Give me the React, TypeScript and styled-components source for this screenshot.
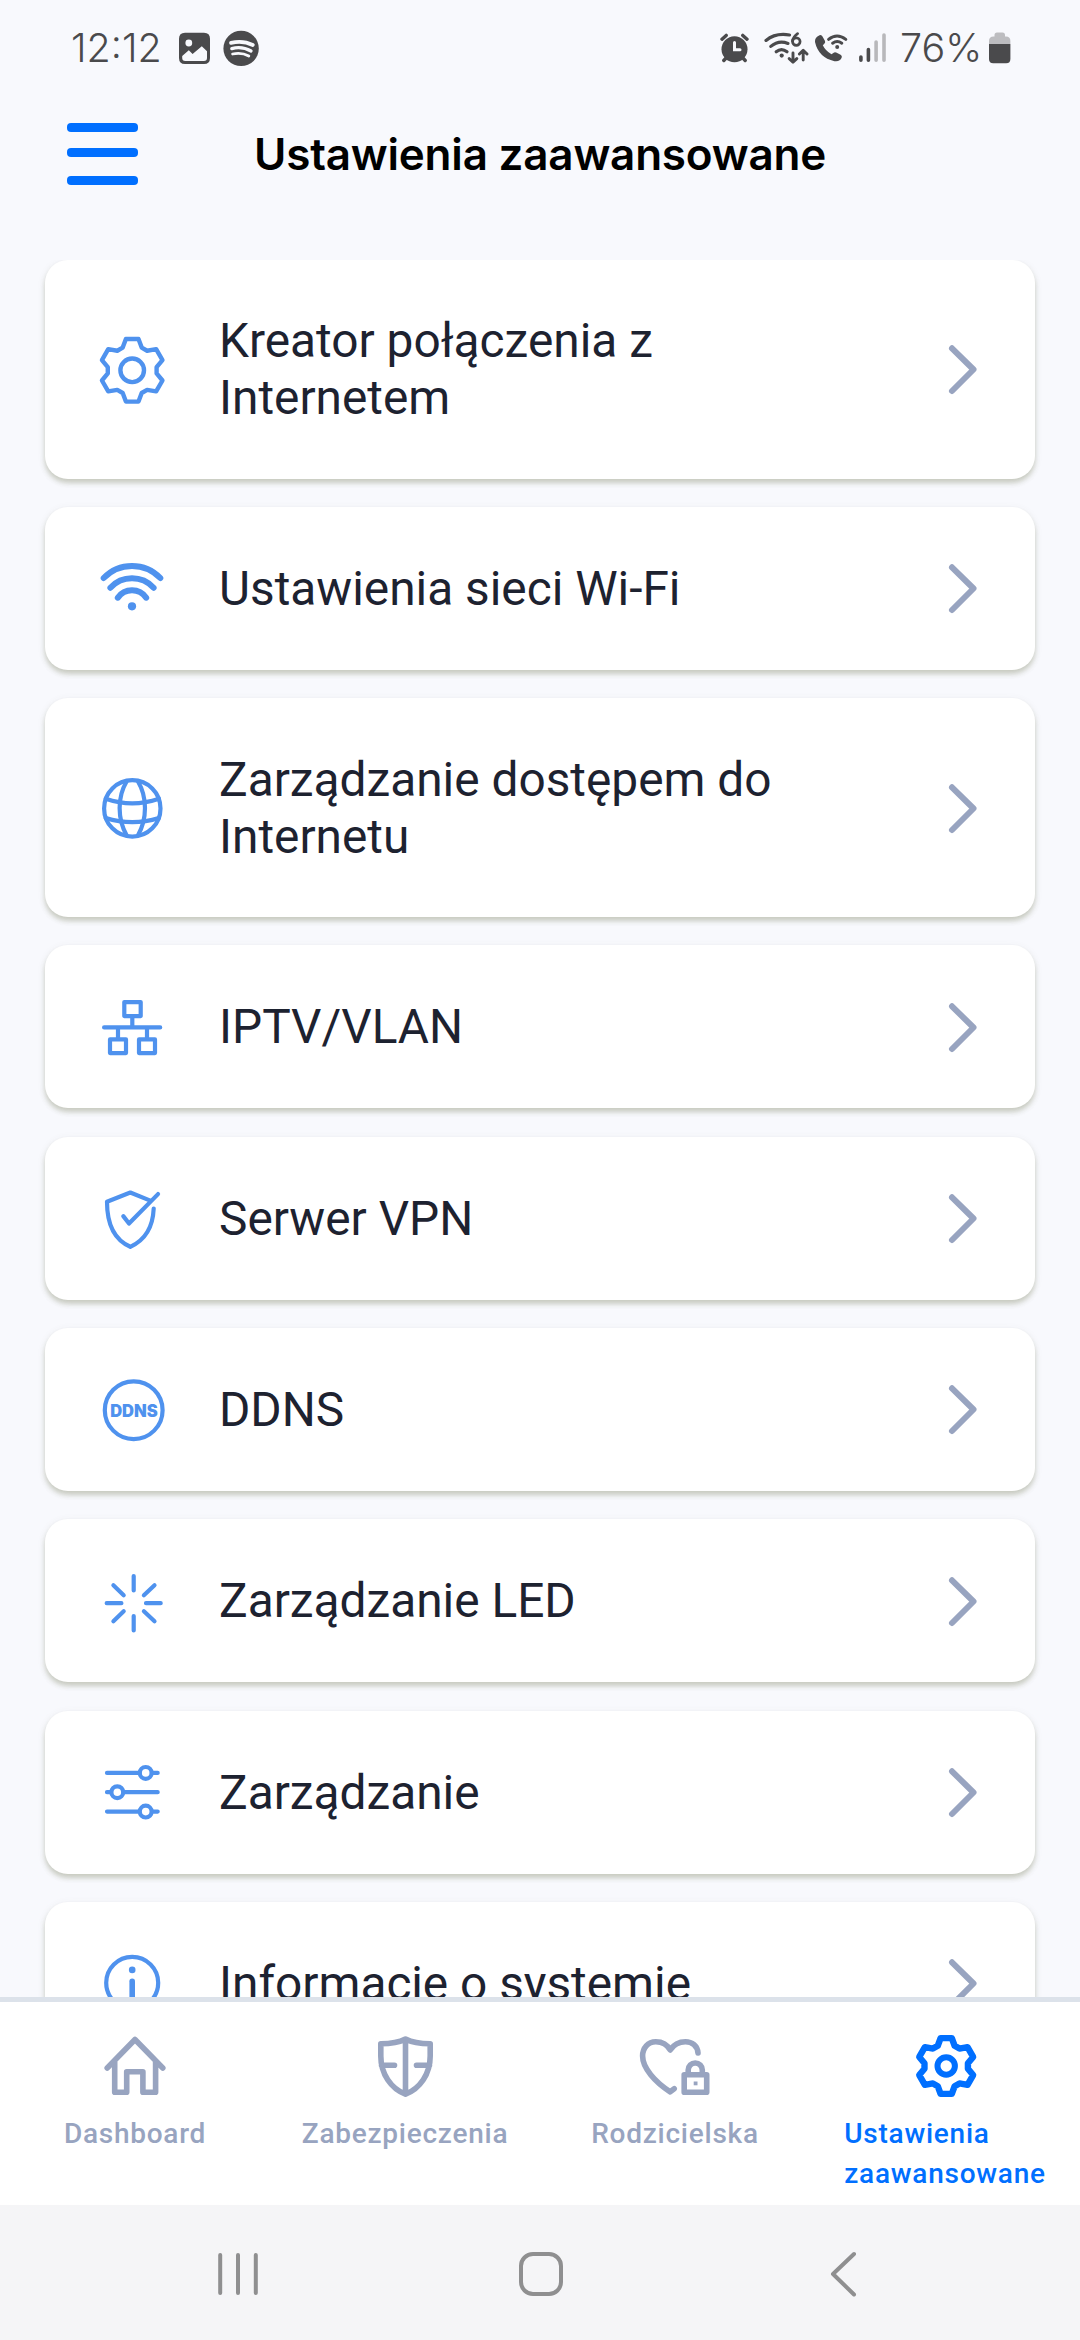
import React from "react";
import styled, { createGlobalStyle } from "styled-components";

const color = {
  page: "#f8f9fd",
  ink: "#1d2230",
  icon: "#4f92ee",
  muted: "#98a4c0",
  active: "#006fff",
  status: "#4a4a4c",
};

const GlobalStyle = createGlobalStyle`
  * { box-sizing: border-box; }
  body { margin: 0; background: ${color.page}; }
`;

const Screen = styled.div`
  width: 1080px;
  height: 2340px;
  display: flex;
  flex-direction: column;
  overflow: hidden;
  background: ${color.page};
  font-family: Roboto, "Liberation Sans", sans-serif;
`;

const StatusBar = styled.div`
  height: 96px;
  flex: none;
  display: flex;
  align-items: center;
  justify-content: space-between;
  padding: 0 69px 0 71px;
  color: ${color.status};
`;

const StatusGroup = styled.div`
  display: flex;
  align-items: center;
  height: 96px;
`;

const StatusText = styled.span<{ $width: number; $tracking: number; $gap?: number }>`
  width: ${(p) => p.$width}px;
  margin-left: ${(p) => p.$gap ?? 0}px;
  font-family: Inter, Roboto, sans-serif;
  font-weight: 350;
  font-size: 39.5px;
  line-height: 96px;
  letter-spacing: ${(p) => p.$tracking}px;
  white-space: nowrap;
`;

const StatusGlyph = styled.svg<{ $gap: number }>`
  display: block;
  flex: none;
  height: 96px;
  margin-left: ${(p) => p.$gap}px;
`;

const Header = styled.header`
  height: 163.5px;
  flex: none;
  display: grid;
  grid-template-columns: 71px 1fr 71px;
  align-items: start;
  padding: 27px 67px 0;
`;

const MenuButton = styled.button`
  display: grid;
  grid-template-rows: 25.2px 28.2px 8.6px;
  padding: 0;
  border: 0;
  background: none;
`;

const MenuLine = styled.span`
  width: 71px;
  height: 8.6px;
  border-radius: 4px;
  background: ${color.active};
`;

const Title = styled.h1`
  margin: 0;
  text-align: center;
  font-family: Inter, Roboto, sans-serif;
  font-weight: 600;
  font-size: 44px;
  line-height: 62px;
  letter-spacing: -0.2px;
  color: #000;
  white-space: nowrap;
`;

const List = styled.main`
  flex: 1;
  min-height: 0;
  overflow: hidden;
  display: flex;
  flex-direction: column;
  gap: 28.3px;
  padding: 0 45px;
`;

const Card = styled.div<{ $tall?: boolean }>`
  flex: none;
  height: ${(p) => (p.$tall ? 219 : 163)}px;
  display: flex;
  align-items: center;
  padding: 0 54px 0 51px;
  border-radius: 23px;
  background: #fff;
  box-shadow: 0 4px 5px rgba(90, 95, 50, 0.26), 0 2px 8px rgba(90, 95, 80, 0.08);
`;

const CardIcon = styled.svg`
  display: block;
  flex: none;
  width: 72px;
  height: 72px;
  overflow: visible;
  fill: none;
  stroke: ${color.icon};
  stroke-width: 4.2;
  stroke-linecap: round;
  stroke-linejoin: round;
`;

const DdnsText = styled.text`
  font-family: Inter, Roboto, sans-serif;
  font-weight: 900;
  font-size: 17px;
  fill: ${color.icon};
  stroke: none;
`;

const CardLabel = styled.span`
  flex: 1;
  margin-left: 51px;
  padding: 2px 120px 0 0;
  font-size: 47.8px;
  line-height: 57px;
  color: ${color.ink};
`;

const Chevron = styled.svg`
  display: block;
  flex: none;
  width: 36px;
  height: 60px;
  fill: none;
  stroke: ${color.muted};
  stroke-width: 6;
  stroke-linecap: round;
  stroke-linejoin: round;
`;

const TabBar = styled.nav`
  flex: none;
  height: 208.3px;
  display: grid;
  grid-template-columns: repeat(4, 1fr);
  border-top: 5.3px solid #dce2ea;
  background: #fff;
`;

const Tab = styled.div<{ $active?: boolean }>`
  display: flex;
  flex-direction: column;
  align-items: center;
  padding-top: 28px;
  color: ${(p) => (p.$active ? color.active : color.muted)};
`;

const TabIcon = styled.svg`
  display: block;
  width: 72px;
  height: 72px;
  overflow: visible;
  fill: none;
  stroke: currentColor;
  stroke-width: 5.6;
  stroke-linecap: round;
  stroke-linejoin: round;
`;

const TabLabel = styled.span`
  margin-top: 12px;
  font-weight: 500;
  font-size: 28px;
  line-height: 40px;
  letter-spacing: 0.75px;
  white-space: pre;
`;

const SystemBar = styled.div`
  flex: none;
  height: 135px;
  display: flex;
  align-items: center;
  justify-content: space-between;
  padding: 3px 208px 0 210px;
  background: #f5f5f7;
`;

const SystemGlyph = styled.svg`
  display: block;
  fill: none;
  stroke: #8f8f90;
  stroke-width: 4;
  stroke-linecap: round;
  stroke-linejoin: round;
`;

/* One tooth of the six-tooth gear, repeated every 60 degrees round the origin. */
const tooth: [number, number][] = [
  [-9.5, -22.7],
  [-6.3, -31.3],
  [6.3, -31.3],
  [9.5, -22.7],
];

const gearPath = (() => {
  const points: string[] = [];
  for (let i = 0; i < 6; i += 1) {
    const a = (i * Math.PI) / 3;
    for (const [x, y] of tooth) {
      const px = x * Math.cos(a) - y * Math.sin(a);
      const py = x * Math.sin(a) + y * Math.cos(a);
      points.push(`${px.toFixed(2)} ${py.toFixed(2)}`);
    }
  }
  return `M${points.join("L")}Z`;
})();

const icons: Record<string, React.ReactNode> = {
  gear: (
    <g transform="translate(36.2 37.3)" strokeWidth="4.4">
      <path d={gearPath} />
      <circle r="11.8" />
    </g>
  ),
  wifi: (
    <g strokeWidth="6">
      <path d="M7.7 26A39.2 39.2 0 0 1 64.3 26" />
      <path d="M14.4 35.7A29.5 29.5 0 0 1 57.6 35.7" />
      <path d="M21.8 45.7A17.3 17.3 0 0 1 50.2 45.7" />
      <circle cx="36" cy="54.3" r="4.1" fill={color.icon} stroke="none" />
    </g>
  ),
  globe: (
    <>
      <circle cx="36.3" cy="36.4" r="28.2" />
      <path d="M30.6 9.5C21.3 25 21.3 47 30.6 63.3M42 9.5C51.3 25 51.3 47 42 63.3" />
      <path d="M9.7 26.8Q36.3 36 62.9 26.8M9.7 46Q36.3 54.4 62.9 46" />
    </>
  ),
  network: (
    <>
      <rect x="28.3" y="11.1" width="16.4" height="14" />
      <rect x="14" y="48.4" width="16" height="13.7" />
      <rect x="43" y="48.4" width="16" height="13.7" />
      <path d="M8.1 36.4H64.2M36.3 26V36M22 37V47M51 37V47" />
    </>
  ),
  shield: (
    <>
      <path d="M54.3 18.6L34.3 10.5L11 19.8C11 41 17.5 57.5 34.3 64.8C51.5 57 57 43 57.7 26.5" />
      <path d="M27.3 34.1L33 41.5L62 12.1" />
    </>
  ),
  ddns: (
    <>
      <circle cx="37.7" cy="37.2" r="28.9" />
      <DdnsText x="37.9" y="44.2" textAnchor="middle" textLength="47.5" lengthAdjust="spacingAndGlyphs">
        DDNS
      </DdnsText>
    </>
  ),
  led: (
    <path
      transform="translate(37.7 38.2)"
      d="M0 -27.2V-12.8M0 12.8V27.2M-27 0H-12.3M12.3 0H27M-20.3 -18L-10 -8M20.8 -18L10.2 -8M-20.3 18L-10 8M20.8 18L10.2 8"
    />
  ),
  sliders: (
    <>
      <path d="M11 16.9H61.7M11 36.2H61.7M11 55.6H61.7" />
      <circle cx="49.7" cy="16.9" r="5.9" fill="#fff" />
      <circle cx="21.3" cy="36.2" r="5.9" fill="#fff" />
      <circle cx="49.7" cy="55.6" r="5.9" fill="#fff" />
    </>
  ),
  info: (
    <>
      <circle cx="36.2" cy="35.8" r="26" />
      <circle cx="36.2" cy="22.9" r="3.3" fill={color.icon} stroke="none" />
      <path d="M36.2 34.3V50" strokeWidth="5.6" />
    </>
  ),
};

const entries: { icon: string; label: string; tall?: boolean }[] = [
  { icon: "gear", label: "Kreator połączenia z Internetem", tall: true },
  { icon: "wifi", label: "Ustawienia sieci Wi-Fi" },
  { icon: "globe", label: "Zarządzanie dostępem do Internetu", tall: true },
  { icon: "network", label: "IPTV/VLAN" },
  { icon: "shield", label: "Serwer VPN" },
  { icon: "ddns", label: "DDNS" },
  { icon: "led", label: "Zarządzanie LED" },
  { icon: "sliders", label: "Zarządzanie" },
  { icon: "info", label: "Informacje o systemie" },
];

function Status() {
  const c = color.status;
  return (
    <StatusBar>
      <StatusGroup>
        <StatusText $width={91} $tracking={0}>12:12</StatusText>
        <StatusGlyph $gap={17} width="31" viewBox="179 0 31 96">
          <path
            fillRule="evenodd"
            fill={c}
            d="M185 32.8H204Q210 32.8 210 38.8V58Q210 64 204 64H185Q179 64 179 58V38.8Q179 32.8 185 32.8ZM182.2 56V58Q182.2 61 185.2 61H204Q207 61 207 58V51.3L201.8 46.2L192.6 54L188.8 50.3Z"
          />
          <circle cx="188.8" cy="43" r="3.4" fill={color.page} />
        </StatusGlyph>
        <StatusGlyph $gap={13} width="36" viewBox="223 0 36 96">
          <circle cx="241.1" cy="48.4" r="17.7" fill={c} />
          <g fill="none" stroke={color.page} strokeLinecap="round">
            <path d="M231 42.8Q243 40 252.8 45" strokeWidth="3.8" />
            <path d="M231.8 48.6Q242 46 251 51" strokeWidth="3.3" />
            <path d="M232.6 54Q241.5 52 248.8 56" strokeWidth="2.8" />
          </g>
        </StatusGlyph>
      </StatusGroup>
      <StatusGroup>
        <StatusGlyph $gap={0} width="30" viewBox="720 0 30 96">
          <circle cx="734.5" cy="49.2" r="13" fill={c} />
          <g fill="none" stroke={c} strokeWidth="3.4" strokeLinecap="round">
            <path d="M722 39.2L726.2 35.4M747 39.2L742.8 35.4M723.8 60.5L727 57M745.2 60.5L742 57" />
          </g>
          <path d="M734.5 42.5V49.7H740" fill="none" stroke={color.page} strokeWidth="3" strokeLinecap="round" />
        </StatusGlyph>
        <StatusGlyph $gap={14} width="45" viewBox="764 0 45 96">
          <g fill="none" stroke={c} strokeWidth="3.2" strokeLinecap="round" strokeLinejoin="round">
            <path d="M766 40.4Q775.5 32.6 789.5 35" />
            <path d="M770.8 46.4Q778.5 39.8 788 43.4" />
            <path d="M776.2 51.8Q781.5 47.4 787 51.8" />
            <path d="M793 53V61.5M789.2 58.6L793 62.2L796.8 58.6M803.2 60V51M799.4 54L803.2 50.2L807 54" strokeWidth="2.9" />
            <circle cx="796.3" cy="41.6" r="3.8" strokeWidth="2.7" />
            <path d="M797.6 33.6Q793 37 792.5 41" strokeWidth="2.7" />
          </g>
          <circle cx="781.7" cy="55.6" r="2.1" fill={c} />
        </StatusGlyph>
        <StatusGlyph $gap={5} width="34" viewBox="814 0 34 96">
          <path
            fill={c}
            d="M819.5 35.3Q821.5 34.5 822.5 36.6L825 41Q825.6 42.6 824.3 43.8L822.8 45.3Q825.5 51 831.5 54.3L833.7 52.7Q834.8 51.8 836.2 52.6L840.6 54.7Q842.4 55.7 841.7 57.6Q840 62 834.5 61.2Q818.5 57.6 815 42Q814.6 37.2 819.5 35.3Z"
          />
          <g fill="none" stroke={c} strokeWidth="3" strokeLinecap="round">
            <path d="M828.6 39.4Q837 32.6 845.8 39.4" />
            <path d="M832.6 43.2Q837.2 39.8 841.8 43.2" />
          </g>
          <circle cx="837.2" cy="47" r="2" fill={c} />
        </StatusGlyph>
        <StatusGlyph $gap={10} width="28" viewBox="858 0 28 96">
          <g fill="none" strokeWidth="3.6" strokeLinecap="round">
            <path d="M860.9 57V60.2M868.4 49.6V60.2" stroke={c} />
            <path d="M876.1 42V60.2M884 35V60.2" stroke="#b8b8bb" />
          </g>
        </StatusGlyph>
        <StatusText $width={84} $tracking={0} $gap={14}>76%</StatusText>
        <StatusGlyph $gap={5} width="22" viewBox="989 0 22 96">
          <path d="M994.5 35Q994.5 32.5 997 32.5H1002.5Q1005 32.5 1005 35V36.5H1006Q1010.4 36.5 1010.4 41V44H989V41Q989 36.5 993.5 36.5H994.5Z" fill="#bdbdc0" />
          <path d="M989 44H1010.4V59Q1010.4 63.2 1006.2 63.2H993.2Q989 63.2 989 59Z" fill={c} />
        </StatusGlyph>
      </StatusGroup>
    </StatusBar>
  );
}

export default function App() {
  return (
    <Screen>
      <GlobalStyle />
      <Status />
      <Header>
        <MenuButton aria-label="Menu">
          <MenuLine />
          <MenuLine />
          <MenuLine />
        </MenuButton>
        <Title>Ustawienia zaawansowane</Title>
      </Header>
      <List>
        {entries.map((e) => (
          <Card key={e.label} $tall={e.tall}>
            <CardIcon viewBox="0 0 72 72">{icons[e.icon]}</CardIcon>
            <CardLabel>{e.label}</CardLabel>
            <Chevron viewBox="0 0 36 60">
              <path d="M7 9.3L28.5 30.5L7 52" />
            </Chevron>
          </Card>
        ))}
      </List>
      <TabBar>
        <Tab>
          <TabIcon viewBox="0 0 72 72">
            <path d="M8.2 38L36 9.5L63.8 38M15.7 32V62.2H27.7V41.8H43.9V62.2H56.6V32" />
          </TabIcon>
          <TabLabel>Dashboard</TabLabel>
        </Tab>
        <Tab>
          <TabIcon viewBox="0 0 72 72">
            <path d="M36.5 9C29 13 20 13.8 11.8 13.8V26C11.8 44 22 58.5 36.5 64.2C51 58.5 61.2 44 61.2 26V13.8C53 13.8 44 13 36.5 9ZM36.5 9V64M12.5 35.3H25.5M47.5 35.3H60.5" />
          </TabIcon>
          <TabLabel>Zabezpieczenia</TabLabel>
        </Tab>
        <Tab>
          <TabIcon viewBox="0 0 72 72">
            <path d="M59 23C58.5 16 53 11.7 46.5 11.7C40 11.7 35 14 31.2 20C28 14 22.5 11.7 16.8 11.7C9 11.7 3.6 18 3.6 26C3.6 38 16 52 31.2 61.8L35.2 58.8" />
            <rect x="45.2" y="44.8" width="22.5" height="17.5" />
            <path d="M49.2 44V40A7 7 0 0 1 63.3 40V44" />
            <rect x="54.7" y="51.5" width="3.8" height="3.8" fill="currentColor" stroke="none" />
          </TabIcon>
          <TabLabel>Rodzicielska</TabLabel>
        </Tab>
        <Tab $active>
          <TabIcon viewBox="0 0 72 72">
            <g transform="translate(37.2 36)">
              <path d={gearPath} transform="scale(.89)" strokeWidth="7.2" />
              <circle r="8.7" strokeWidth="6" />
            </g>
          </TabIcon>
          <TabLabel>{"Ustawienia\nzaawansowane"}</TabLabel>
        </Tab>
      </TabBar>
      <SystemBar>
        <SystemGlyph width="56" height="60" viewBox="210 2244 56 60">
          <path d="M220.2 2255V2293M238 2255V2293M255.8 2255V2293" />
        </SystemGlyph>
        <SystemGlyph width="56" height="60" viewBox="512 2244 56 60">
          <rect x="520" y="2254" width="40" height="40" rx="12" />
        </SystemGlyph>
        <SystemGlyph width="56" height="60" viewBox="816 2244 56 60">
          <path d="M854 2254L833 2274L854 2294.5" />
        </SystemGlyph>
      </SystemBar>
    </Screen>
  );
}
